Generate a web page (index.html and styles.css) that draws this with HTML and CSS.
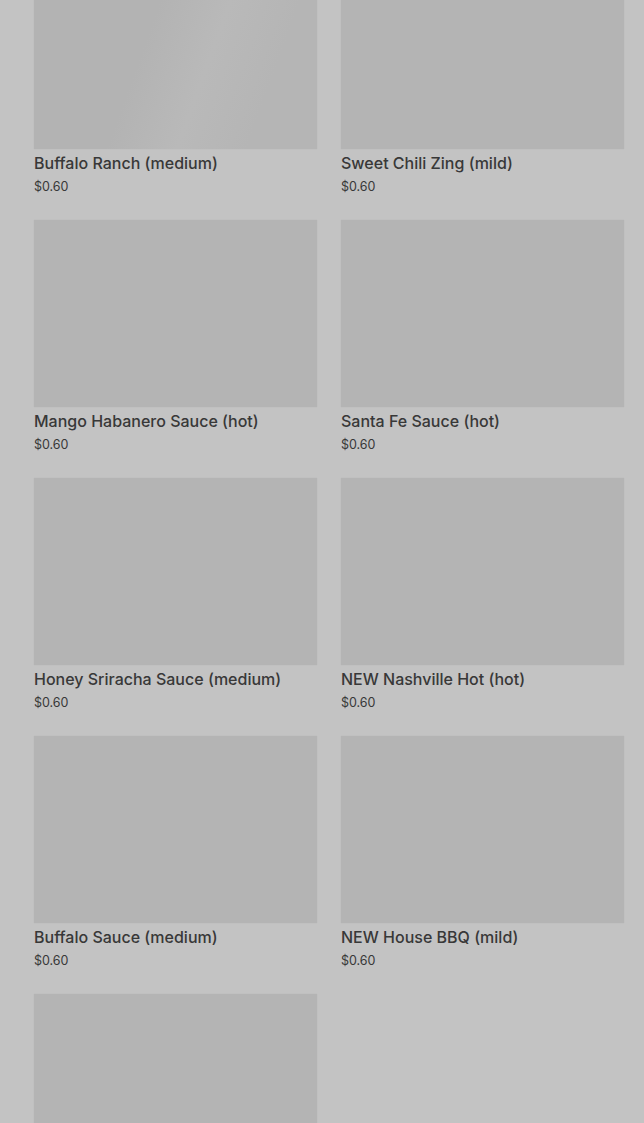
FILE: index.html
```html
<!DOCTYPE html>
<html lang="en">

<head>
    <meta charset="UTF-8">
    <meta name="viewport" content="width=device-width, initial-scale=1.0">
    <title>Sauces</title>
    <link rel="stylesheet" href="styles.css">
</head>

<body>
    <!-- Product grid (loading state) -->
    <div class="grid">
        <div class="item">
            <div class="thumb shimmer"></div>
            <div class="name">Buffalo Ranch (medium)</div>
            <div class="price">$0.60</div>
        </div>
        <div class="item">
            <div class="thumb"></div>
            <div class="name">Sweet Chili Zing (mild)</div>
            <div class="price">$0.60</div>
        </div>
        <div class="item">
            <div class="thumb"></div>
            <div class="name">Mango Habanero Sauce (hot)</div>
            <div class="price">$0.60</div>
        </div>
        <div class="item">
            <div class="thumb"></div>
            <div class="name">Santa Fe Sauce (hot)</div>
            <div class="price">$0.60</div>
        </div>
        <div class="item">
            <div class="thumb"></div>
            <div class="name">Honey Sriracha Sauce (medium)</div>
            <div class="price">$0.60</div>
        </div>
        <div class="item">
            <div class="thumb"></div>
            <div class="name">NEW Nashville Hot (hot)</div>
            <div class="price">$0.60</div>
        </div>
        <div class="item">
            <div class="thumb"></div>
            <div class="name">Buffalo Sauce (medium)</div>
            <div class="price">$0.60</div>
        </div>
        <div class="item">
            <div class="thumb"></div>
            <div class="name">NEW House BBQ (mild)</div>
            <div class="price">$0.60</div>
        </div>
        <div class="item">
            <div class="thumb"></div>
        </div>
    </div>
</body>

</html>
```

FILE: styles.css
```css
/* Page */
body {
    margin: 0;
    background: #c3c3c3;
    font-family: Inter, "Noto Sans", sans-serif;
    color: #383838;
    overflow: hidden;
}

/* Two column grid, page is scrolled a little */
.grid {
    display: grid;
    grid-template-columns: 1fr 1fr;
    column-gap: 24px;
    row-gap: 24px;
    padding: 0 20px 0 34px;
    margin-top: -38px;
}

.thumb {
    height: 187px;
    background: #b4b4b4;
    box-shadow: 0 0 1px rgba(0, 0, 0, 0.08);
}

/* Loading shimmer on first image */
.thumb.shimmer {
    background: linear-gradient(110deg, #b3b3b3 40%, #b9b9b9 60%, #b5b5b5 80%);
}

.name {
    margin-top: 4px;
    font-size: 16px;
    font-weight: 500;
    line-height: 20px;
}

.price {
    margin-top: 5px;
    font-size: 12.5px;
    line-height: 18px;
}
```
